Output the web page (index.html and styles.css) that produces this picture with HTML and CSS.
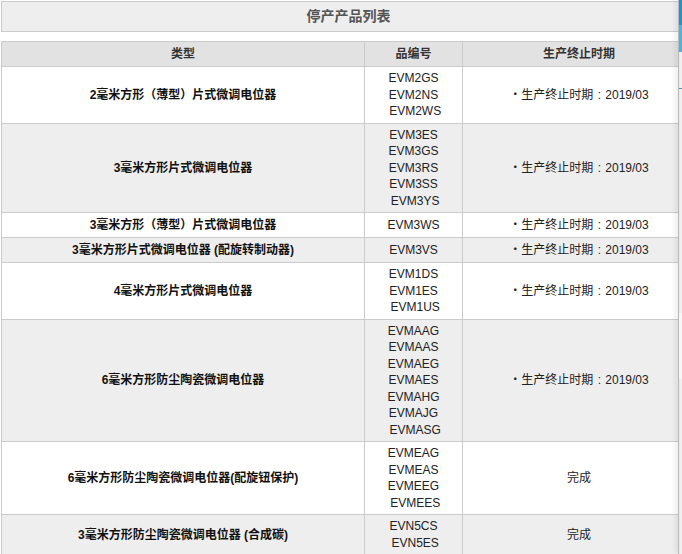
FILE: index.html
```html
<!DOCTYPE html>
<html lang="zh-CN">
<head>
<meta charset="utf-8">
<title>停产产品列表</title>
<link rel="stylesheet" href="styles.css">
</head>
<body>
<div class="page">
  <div class="title">停产产品列表</div>
  <table class="list">
    <colgroup>
      <col class="col-type">
      <col class="col-code">
      <col class="col-date">
    </colgroup>
    <thead>
      <tr><th>类型</th><th>品编号</th><th>生产终止时期</th></tr>
    </thead>
    <tbody>
      <tr>
        <td class="type">2毫米方形（薄型）片式微调电位器</td>
        <td class="code">EVM2GS<br>EVM2NS<br>&nbsp;EVM2WS</td>
        <td class="date">・生产终止时期<span class="colon">:</span>2019/03</td>
      </tr>
      <tr class="alt">
        <td class="type">3毫米方形片式微调电位器</td>
        <td class="code">EVM3ES<br>EVM3GS<br>EVM3RS<br>EVM3SS<br>&nbsp;EVM3YS</td>
        <td class="date">・生产终止时期<span class="colon">:</span>2019/03</td>
      </tr>
      <tr>
        <td class="type">3毫米方形（薄型）片式微调电位器</td>
        <td class="code">EVM3WS</td>
        <td class="date">・生产终止时期<span class="colon">:</span>2019/03</td>
      </tr>
      <tr class="alt">
        <td class="type">3毫米方形片式微调电位器 (配旋转制动器)</td>
        <td class="code">EVM3VS</td>
        <td class="date">・生产终止时期<span class="colon">:</span>2019/03</td>
      </tr>
      <tr>
        <td class="type">4毫米方形片式微调电位器</td>
        <td class="code">EVM1DS<br>EVM1ES<br>&nbsp;EVM1US</td>
        <td class="date">・生产终止时期<span class="colon">:</span>2019/03</td>
      </tr>
      <tr class="alt">
        <td class="type">6毫米方形防尘陶瓷微调电位器</td>
        <td class="code">EVMAAG<br>EVMAAS<br>EVMAEG<br>EVMAES<br>EVMAHG<br>EVMAJG<br>&nbsp;EVMASG</td>
        <td class="date">・生产终止时期<span class="colon">:</span>2019/03</td>
      </tr>
      <tr>
        <td class="type">6毫米方形防尘陶瓷微调电位器(配旋钮保护)</td>
        <td class="code">EVMEAG<br>EVMEAS<br>EVMEEG<br>&nbsp;EVMEES</td>
        <td class="date">完成</td>
      </tr>
      <tr class="alt">
        <td class="type">3毫米方形防尘陶瓷微调电位器 (合成碳)</td>
        <td class="code">EVN5CS<br>&nbsp;EVN5ES</td>
        <td class="date">完成</td>
      </tr>
    </tbody>
  </table>
</div>
<div class="edge">
  <div class="edge-top"></div>
  <div class="edge-mid"></div>
  <div class="edge-tick"></div>
  <div class="edge-panel"></div>
</div>
</body>
</html>
```

FILE: styles.css
```css
html, body {
  margin: 0;
  padding: 0;
  background: #fff;
  overflow: hidden;
}

body {
  font-family: "Liberation Sans", "Noto Sans CJK SC", sans-serif;
  font-size: 12px;
  color: #222;
}

.page {
  width: 695px;
  padding: 1px 0 0 1px;
}

.title {
  height: 29px;
  line-height: 29px;
  border: 1px solid #cbcbcb;
  background: #eeeeee;
  text-align: center;
  font-size: 14px;
  font-weight: bold;
  color: #555;
}

.list {
  margin-top: 9px;
  width: 100%;
  border-collapse: collapse;
  table-layout: fixed;
}

.col-type { width: 363px; }
.col-code { width: 98px; }

.list th {
  height: 24px;
  padding: 0;
  background: #e2e2e2;
  border: 1px solid #cbcbcb;
  font-size: 12px;
  font-weight: bold;
  color: #333;
  text-align: center;
  line-height: 24px;
}

.list td {
  padding: 3px 4px;
  border: 1px solid #cbcbcb;
  text-align: center;
  vertical-align: middle;
  background: #fff;
}

.list tr.alt td {
  background: #eeeeee;
}

.type {
  font-weight: bold;
  color: #111;
  line-height: 18px;
}

.code {
  line-height: 16.5px;
  color: #222;
}

.date {
  line-height: 18px;
  color: #222;
}

.colon {
  display: inline-block;
  width: 12px;
  text-align: center;
  line-height: 12px;
}

.edge {
  position: fixed;
  top: 0;
  right: 0;
  width: 3px;
  height: 100%;
  background: linear-gradient(to right, #e9e9e9, #f3f3f3);
  border-left: 1px solid #b9b9b9;
  box-shadow: -3px 0 4px rgba(0, 0, 0, 0.08);
}

.edge-top {
  height: 25px;
  background: #1796d4;
}

.edge-mid {
  height: 27px;
  background: #49b4e8;
}

.edge-tick {
  margin-top: 36px;
  height: 1px;
  background: #2aa3df;
}

.edge-panel {
  margin-top: 224px;
  height: 66px;
  background: #f7f7f7;
}
```
